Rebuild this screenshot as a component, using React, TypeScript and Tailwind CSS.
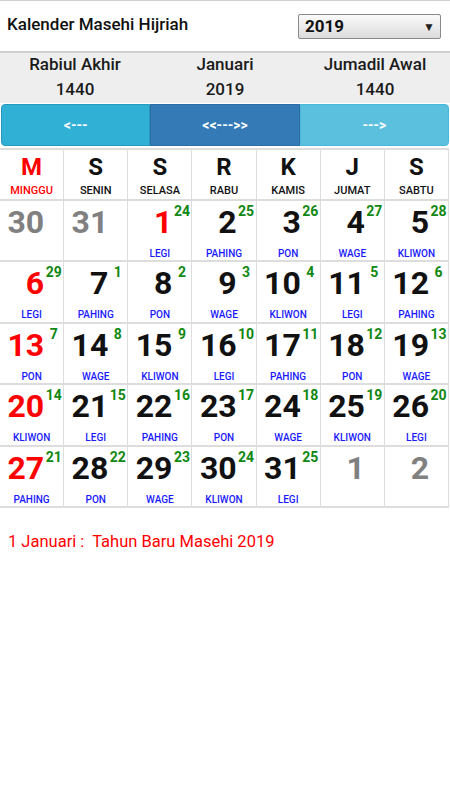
import React from "react";

type Cell = { d: number; h?: number; p?: string; red?: boolean; gray?: boolean };

const rows: Cell[][] = [
  [
    { d: 30, gray: true },
    { d: 31, gray: true },
    { d: 1, h: 24, p: "LEGI", red: true },
    { d: 2, h: 25, p: "PAHING" },
    { d: 3, h: 26, p: "PON" },
    { d: 4, h: 27, p: "WAGE" },
    { d: 5, h: 28, p: "KLIWON" },
  ],
  [
    { d: 6, h: 29, p: "LEGI", red: true },
    { d: 7, h: 1, p: "PAHING" },
    { d: 8, h: 2, p: "PON" },
    { d: 9, h: 3, p: "WAGE" },
    { d: 10, h: 4, p: "KLIWON" },
    { d: 11, h: 5, p: "LEGI" },
    { d: 12, h: 6, p: "PAHING" },
  ],
  [
    { d: 13, h: 7, p: "PON", red: true },
    { d: 14, h: 8, p: "WAGE" },
    { d: 15, h: 9, p: "KLIWON" },
    { d: 16, h: 10, p: "LEGI" },
    { d: 17, h: 11, p: "PAHING" },
    { d: 18, h: 12, p: "PON" },
    { d: 19, h: 13, p: "WAGE" },
  ],
  [
    { d: 20, h: 14, p: "KLIWON", red: true },
    { d: 21, h: 15, p: "LEGI" },
    { d: 22, h: 16, p: "PAHING" },
    { d: 23, h: 17, p: "PON" },
    { d: 24, h: 18, p: "WAGE" },
    { d: 25, h: 19, p: "KLIWON" },
    { d: 26, h: 20, p: "LEGI" },
  ],
  [
    { d: 27, h: 21, p: "PAHING", red: true },
    { d: 28, h: 22, p: "PON" },
    { d: 29, h: 23, p: "WAGE" },
    { d: 30, h: 24, p: "KLIWON" },
    { d: 31, h: 25, p: "LEGI" },
    { d: 1, gray: true },
    { d: 2, gray: true },
  ],
];

const heads = [
  ["M", "MINGGU"],
  ["S", "SENIN"],
  ["S", "SELASA"],
  ["R", "RABU"],
  ["K", "KAMIS"],
  ["J", "JUMAT"],
  ["S", "SABTU"],
];

const rowH = ["h-[61px]", "h-[62px]", "h-[61px]", "h-[62px]", "h-[61px]"];

export default function App() {
  return (
    <div
      className="w-[450px] h-[800px] bg-white overflow-hidden"
      style={{ fontFamily: "Roboto, 'Liberation Sans', sans-serif" }}
    >
      <div className="border-t border-[#cfcfcf]" />
      <div className="flex items-start justify-between h-[50px] pt-[13px] pl-[7px] pr-[9px]">
        <div className="text-[17px] font-medium text-[#111] leading-none mt-[2px]">Kalender Masehi Hijriah</div>
        <div className="w-[143px] h-[25px] border border-[#8a8a8a] rounded-[2px] bg-gradient-to-b from-[#fafafa] to-[#dcdcdc] flex items-center justify-between pl-[6px] pr-[5px]">
          <span className="text-[17px] font-bold text-[#111] leading-none">2019</span>
          <span className="text-[12px] text-[#222] leading-none">▼</span>
        </div>
      </div>
      <div className="border-t-2 border-[#d0d0d0] bg-[#eeeeee]">
        <div className="grid grid-cols-3 h-[50px] text-[17px] font-medium text-[#1a1a1a] leading-none">
          <div className="flex flex-col items-center pt-[3px] gap-[8px]">
            <span>Rabiul Akhir</span>
            <span>1440</span>
          </div>
          <div className="flex flex-col items-center pt-[3px] gap-[8px]">
            <span>Januari</span>
            <span>2019</span>
          </div>
          <div className="flex flex-col items-center pt-[3px] gap-[8px]">
            <span>Jumadil Awal</span>
            <span>1440</span>
          </div>
        </div>
      </div>
      <div className="bg-white px-[1px] pt-[1px] pb-[2px]">
        <div className="flex h-[42px] text-white text-[14px] font-bold">
          <div className="flex-1 flex items-center justify-center bg-[#31b0d5] border border-[#269abc] rounded-l-[4px]">
            &lt;---
          </div>
          <div className="flex-1 flex items-center justify-center bg-[#337ab7] border border-[#2e6da4]">
            &lt;&lt;---&gt;&gt;
          </div>
          <div className="flex-1 flex items-center justify-center bg-[#5bc0de] border border-[#46b8da] rounded-r-[4px]">
            ---&gt;
          </div>
        </div>
      </div>
      <div className="w-[449px] grid grid-cols-7 border-t-2 border-[#dddddd]">
        {heads.map(([l, n], i) => (
          <div
            key={i}
            className="h-[51px] border-r border-b-2 border-[#dddddd] flex flex-col items-center"
          >
            <span
              className={`text-[24px] font-bold leading-none mt-[5px] ${i === 0 ? "text-[#ff0000]" : "text-[#111]"}`}
            >
              {l}
            </span>
            <span
              className={`text-[11px] font-medium leading-none mt-[6px] ${i === 0 ? "text-[#ff0000]" : "text-[#111]"}`}
            >
              {n}
            </span>
          </div>
        ))}
        {rows.map((r, ri) =>
          r.map((c, ci) => (
            <div
              key={`${ri}-${ci}`}
              className={`${rowH[ri]} border-r border-b-2 border-[#dddddd] flex flex-col`}
            >
              <div className="flex h-[40px]">
                <div
                  className={`w-[70%] text-right text-[32px] font-bold leading-none pt-[5px] ${
                    c.gray ? "text-[#808080]" : c.red ? "text-[#ff0000]" : "text-[#111]"
                  }`}
                >
                  {c.d}
                </div>
                <div className="flex-1 text-center text-[14px] font-bold text-[#118811] leading-none pt-[3px]">
                  {c.h ?? ""}
                </div>
              </div>
              <div className="text-center text-[10px] font-medium text-[#1a1aff] leading-none mt-[8px]">
                {c.p ?? ""}
              </div>
            </div>
          ))
        )}
      </div>
      <div className="pl-[8px] pt-[26px] text-[16.5px] text-[#ff0000] leading-none whitespace-pre">
        {"1 Januari :  Tahun Baru Masehi 2019"}
      </div>
    </div>
  );
}
